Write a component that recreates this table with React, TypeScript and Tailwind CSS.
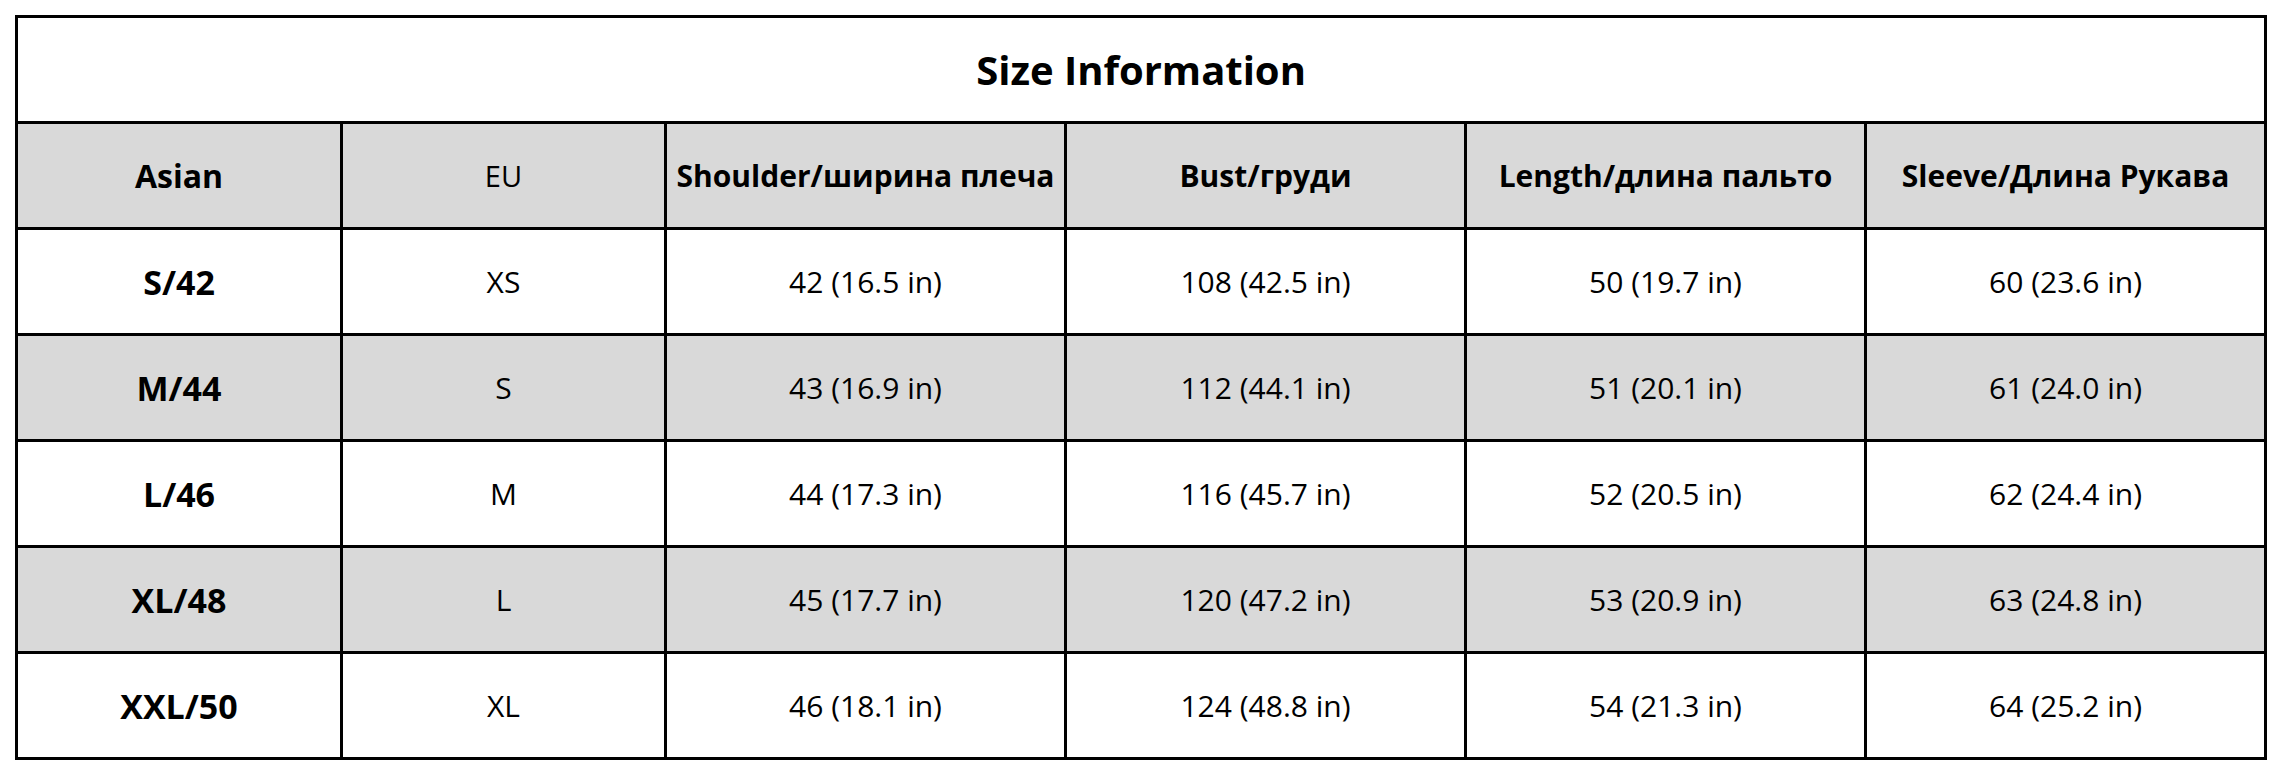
import React from "react";

const headers = [
  "Asian",
  "EU",
  "Shoulder/ширина плеча",
  "Bust/груди",
  "Length/длина пальто",
  "Sleeve/Длина Рукава",
];

const rows = [
  ["S/42", "XS", "42 (16.5 in)", "108 (42.5 in)", "50 (19.7 in)", "60 (23.6 in)"],
  ["M/44", "S", "43 (16.9 in)", "112 (44.1 in)", "51 (20.1 in)", "61 (24.0 in)"],
  ["L/46", "M", "44 (17.3 in)", "116 (45.7 in)", "52 (20.5 in)", "62 (24.4 in)"],
  ["XL/48", "L", "45 (17.7 in)", "120 (47.2 in)", "53 (20.9 in)", "63 (24.8 in)"],
  ["XXL/50", "XL", "46 (18.1 in)", "124 (48.8 in)", "54 (21.3 in)", "64 (25.2 in)"],
];

const widths = ["w-[325px]", "w-[324px]", "w-[400px]", "w-[400px]", "w-[400px]", "w-[400px]"];

export default function App() {
  return (
    <div
      className="w-[2280px] h-[774px] bg-white pl-[15px] pt-[15px] text-black"
      style={{ fontFamily: '"Open Sans", "Noto Sans", Arial, sans-serif' }}
    >
      <table className="border-collapse border-[3px] border-black table-fixed w-[2250px]">
        <colgroup>
          {widths.map((w, i) => (
            <col key={i} className={w} />
          ))}
        </colgroup>
        <tbody>
          <tr className="h-[106px]">
            <td colSpan={6} className="border-[3px] border-black bg-white text-center align-middle text-[40px] font-bold leading-none">
              Size Information
            </td>
          </tr>
          <tr className="h-[106px] bg-[#d9d9d9]">
            {headers.map((h, i) => (
              <td
                key={i}
                className={
                  "border-[3px] border-black text-center align-middle leading-none whitespace-nowrap " +
                  (i === 1 ? "text-[29px] font-normal" : i === 0 ? "text-[32px] font-bold" : "text-[30px] font-bold")
                }
              >
                {h}
              </td>
            ))}
          </tr>
          {rows.map((r, ri) => (
            <tr key={ri} className={"h-[106px] " + (ri % 2 === 1 ? "bg-[#d9d9d9]" : "bg-white")}>
              {r.map((c, ci) => (
                <td
                  key={ci}
                  className={
                    "border-[3px] border-black text-center align-middle leading-none whitespace-nowrap " +
                    (ci === 0 ? "text-[34px] font-bold" : "text-[30px] font-normal")
                  }
                >
                  {c}
                </td>
              ))}
            </tr>
          ))}
        </tbody>
      </table>
    </div>
  );
}
